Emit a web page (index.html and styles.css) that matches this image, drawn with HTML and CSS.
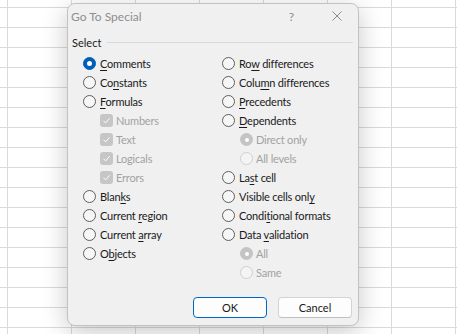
FILE: index.html
```html
<!DOCTYPE html>
<html lang="en">
<head>
    <meta charset="UTF-8">
    <title>Go To Special</title>
    <link rel="stylesheet" href="styles.css">
</head>
<body>
    <!-- sheet grid is the body background -->
    <div class="dialog">
        <div class="titlebar">
            <span class="title">Go To Special</span>
            <span class="help">?</span>
            <svg class="close" width="10" height="10" viewBox="0 0 10 10">
                <path d="M0.5 0.5 L9.5 9.5 M9.5 0.5 L0.5 9.5" stroke="#8a8a8a" stroke-width="1" fill="none"/>
            </svg>
        </div>

        <div class="body">
            <div class="group-head">
                <span>Select</span>
                <span class="rule"></span>
            </div>

            <div class="columns">
                <div class="col">
                    <div class="opt"><span class="radio on"></span><span><u>C</u>omments</span></div>
                    <div class="opt"><span class="radio"></span><span>Co<u>n</u>stants</span></div>
                    <div class="opt"><span class="radio"></span><span><u>F</u>ormulas</span></div>
                    <div class="opt sub dis"><span class="check"><svg width="13" height="13" viewBox="0 0 13 13"><path d="M3.5 6.8 L5.6 8.9 L9.6 4.3" stroke="#fff" stroke-width="1" fill="none"/></svg></span><span>Numbers</span></div>
                    <div class="opt sub dis"><span class="check"><svg width="13" height="13" viewBox="0 0 13 13"><path d="M3.5 6.8 L5.6 8.9 L9.6 4.3" stroke="#fff" stroke-width="1" fill="none"/></svg></span><span>Text</span></div>
                    <div class="opt sub dis"><span class="check"><svg width="13" height="13" viewBox="0 0 13 13"><path d="M3.5 6.8 L5.6 8.9 L9.6 4.3" stroke="#fff" stroke-width="1" fill="none"/></svg></span><span>Logicals</span></div>
                    <div class="opt sub dis"><span class="check"><svg width="13" height="13" viewBox="0 0 13 13"><path d="M3.5 6.8 L5.6 8.9 L9.6 4.3" stroke="#fff" stroke-width="1" fill="none"/></svg></span><span>Errors</span></div>
                    <div class="opt"><span class="radio"></span><span>Blan<u>k</u>s</span></div>
                    <div class="opt"><span class="radio"></span><span>Current <u>r</u>egion</span></div>
                    <div class="opt"><span class="radio"></span><span>Current <u>a</u>rray</span></div>
                    <div class="opt"><span class="radio"></span><span>O<u>b</u>jects</span></div>
                </div>
                <div class="col">
                    <div class="opt"><span class="radio"></span><span>Ro<u>w</u> differences</span></div>
                    <div class="opt"><span class="radio"></span><span>Colu<u>m</u>n differences</span></div>
                    <div class="opt"><span class="radio"></span><span><u>P</u>recedents</span></div>
                    <div class="opt"><span class="radio"></span><span><u>D</u>ependents</span></div>
                    <div class="opt sub2 dis"><span class="radio dis-on"></span><span>Direct only</span></div>
                    <div class="opt sub2 dis"><span class="radio dis-off"></span><span>All levels</span></div>
                    <div class="opt"><span class="radio"></span><span>La<u>s</u>t cell</span></div>
                    <div class="opt"><span class="radio"></span><span>Visible cells onl<u>y</u></span></div>
                    <div class="opt"><span class="radio"></span><span>Condi<u>t</u>ional formats</span></div>
                    <div class="opt"><span class="radio"></span><span>Data <u>v</u>alidation</span></div>
                    <div class="opt sub2 dis"><span class="radio dis-on"></span><span>All</span></div>
                    <div class="opt sub2 dis"><span class="radio dis-off"></span><span>Same</span></div>
                </div>
            </div>
        </div>

        <div class="buttons">
            <button class="btn default">OK</button>
            <button class="btn">Cancel</button>
        </div>
    </div>
</body>
</html>
```

FILE: styles.css
```css
* {
    margin: 0;
    padding: 0;
    box-sizing: border-box;
}

body {
    width: 457px;
    height: 334px;
    overflow: hidden;
    font-family: Lato, "Noto Sans", sans-serif;
    font-size: 11px;
    color: #1a1a1a;
    background-color: #fff;
    background-image:
        linear-gradient(to right, #dadada 1px, transparent 1px),
        linear-gradient(to bottom, #dadada 1px, transparent 1px);
    background-size: 64px 20px;
    background-position: 7px 7px;
}

/* dialog window */
.dialog {
    position: absolute;
    left: 67px;
    top: 3px;
    width: 292px;
    height: 323px;
    background-color: #f0f0f0;
    border: 1px solid #c2c2c2;
    border-radius: 8px;
    box-shadow: 0 6px 26px rgba(0, 0, 0, 0.22);
    display: flex;
    flex-direction: column;
}

.titlebar {
    height: 24px;
    display: flex;
    align-items: center;
    padding-left: 3px;
}

.title {
    flex: 1;
    font-size: 12px;
    color: #8e8e8e;
}

.help {
    font-size: 12px;
    color: #8e8e8e;
    margin-right: 38px;
}

.close {
    margin-right: 16px;
}

.body {
    flex: 1;
    padding: 7px 5px 0 4px;
}

.group-head {
    display: flex;
    align-items: center;
    gap: 6px;
    height: 14px;
}

.rule {
    flex: 1;
    height: 1px;
    background-color: #d9d9d9;
}

.columns {
    display: flex;
    padding-left: 11px;
    padding-top: 5px;
}

.col {
    width: 139px;
    flex-shrink: 0;
}

.opt {
    height: 19px;
    display: flex;
    align-items: center;
    gap: 4px;
    white-space: nowrap;
    letter-spacing: -0.2px;
}

.opt u {
    text-underline-offset: 2px;
}

.opt.sub {
    padding-left: 17px;
    gap: 3px;
}

.opt.sub2 {
    padding-left: 18px;
    gap: 3px;
}

.opt.dis {
    color: #a2a2a2;
}

/* radio buttons */
.radio {
    width: 13px;
    height: 13px;
    border-radius: 50%;
    border: 1px solid #5e5e5e;
    background-color: #f6f6f6;
    display: flex;
    align-items: center;
    justify-content: center;
    flex-shrink: 0;
}

.radio.on {
    background-color: #005fb8;
    border-color: #005fb8;
}

.radio.on::after {
    content: "";
    width: 5px;
    height: 5px;
    border-radius: 50%;
    background-color: #fff;
}

.radio.dis-on {
    background-color: #c4c4c4;
    border-color: #c4c4c4;
}

.radio.dis-on::after {
    content: "";
    width: 4px;
    height: 4px;
    border-radius: 50%;
    background-color: #fff;
}

.radio.dis-off {
    border-color: #cfcfcf;
    background-color: #f4f4f4;
}

/* disabled checkbox */
.check {
    width: 13px;
    height: 13px;
    border-radius: 3px;
    background-color: #c6c6c6;
    display: flex;
    flex-shrink: 0;
}

/* buttons */
.buttons {
    display: flex;
    justify-content: flex-end;
    gap: 11px;
    padding: 0 6px 7px 0;
}

.btn {
    width: 74px;
    height: 21px;
    font-family: Lato, "Noto Sans", sans-serif;
    font-size: 11px;
    color: #1a1a1a;
    background-color: #fdfdfd;
    border: 1px solid #d3d3d3;
    border-bottom-color: #c0c0c0;
    border-radius: 4px;
}

.btn.default {
    border-color: #0067c0;
}
```
